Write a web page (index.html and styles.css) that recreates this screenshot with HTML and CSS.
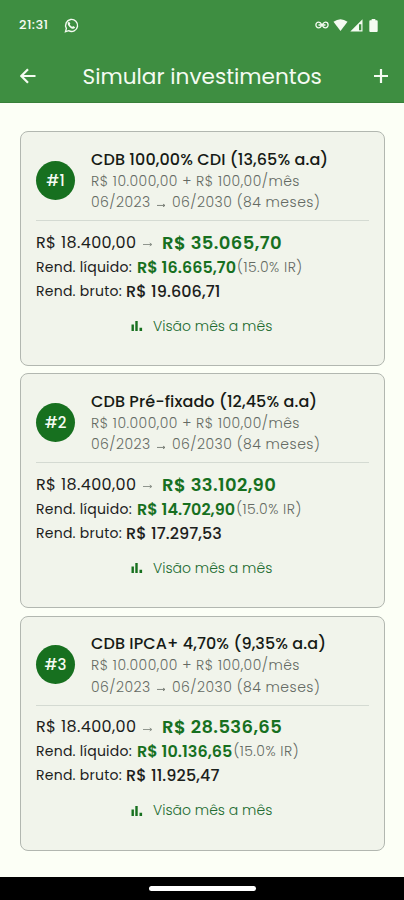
FILE: index.html
```
<!DOCTYPE html>
<html lang="pt-BR">
<head>
<meta charset="utf-8">
<title>Simular investimentos</title>
<link rel="stylesheet" href="styles.css">
</head>
<body>
<svg class="defs" width="0" height="0"><symbol id="bars" viewBox="0 0 12 12"><path d="M.5 4.500h2.400v6.500H.5zM4.300 1h2.400v10H4.300zM8.500 7.800h2.600V11H8.500z"/></symbol>
<symbol id="arrow" viewBox="0 0 10 6"><path d="M0 3.500h8.500M6.700 2 8.900 3.500 6.700 5" fill="none" stroke="currentColor" stroke-width=".9"/></symbol></svg>
<header>
  <div class="status">
    <span class="time">21:31</span>
    <svg class="wa" viewBox="0 0 24 24"><path fill="none" stroke="currentColor" stroke-width="2.200" d="M2.400 21.800 3.800 16.600A9.600 9.600 0 1 1 7.500 20.300z"/><path d="M8.600 6.600c-.5-.8-1.200-.6-1.800 0-2.200 2.300.2 5.700 2.700 8 2.700 2.400 5.700 3.500 7.600 1.500.7-.8.7-1.500.1-1.900l-2.100-1.200c-.5-.2-.8 0-1.500 1-1.900-.6-3.500-2-4.300-3.800.8-.9.9-1.200.6-1.800z"/></svg>
    <span class="space"></span>
    <svg class="link" viewBox="0 0 14 8"><path fill="none" stroke="currentColor" stroke-width="1.300" d="M7 4.100C5.900 2 5 1.200 3.700 1.200a2.800 2.800 0 0 0 0 5.600C5.300 6.800 6 5.500 7 4.100S8.700 1.200 10.300 1.200a2.800 2.800 0 0 1 0 5.600C9 6.800 8.100 6 7 4.100zM3.500 4h2.500M8 4h2.500"/></svg>
    <svg class="wifi" viewBox="0 0 14 12"><path d="M0 2.800Q7-2.400 14 2.800L7 12z"/></svg>
    <svg class="signal" viewBox="0 0 13 13"><path fill-rule="evenodd" d="M12.500.3V12.500H.3zM9 5.300V11.300h2.300V5.300z"/></svg>
    <svg class="battery" viewBox="0 0 9 14"><path d="M2.500 0h4v1.300H8q1 0 1 1V13q0 1-1 1H1q-1 0-1-1V2.300q0-1 1-1h1.500z"/></svg>
  </div>
  <div class="bar">
    <svg class="back" viewBox="0 0 16 16"><path d="M15.500 8H1.700M8 1.200 1.300 8 8 14.800"/></svg>
    <h1>Simular investimentos</h1>
    <svg class="plus" viewBox="0 0 16 16"><path d="M8 1v14M1 8h14"/></svg>
  </div>
</header>
<main>
  <article>
    <div class="top"><div class="rank">#1</div><div class="info">
      <h2>CDB 100,00% CDI (13,65% a.a)</h2>
      <p class="plan">R$ 10.000,00 + R$ 100,00/mês</p>
      <p class="dates"><span>06/2023</span><svg><use href="#arrow"/></svg><span>06/2030 (84 meses)</span></p>
    </div></div>
    <div class="total"><span class="from">R$ 18.400,00</span><svg><use href="#arrow"/></svg><b>R$ 35.065,70</b></div>
    <div class="net"><span>Rend. líquido:</span><b>R$ 16.665,70</b><small>(15.0% IR)</small></div>
    <div class="gross"><span>Rend. bruto:</span><b>R$ 19.606,71</b></div>
    <div class="action"><svg><use href="#bars"/></svg><span>Visão mês a mês</span></div>
  </article>
  <article>
    <div class="top"><div class="rank">#2</div><div class="info">
      <h2>CDB Pré-fixado (12,45% a.a)</h2>
      <p class="plan">R$ 10.000,00 + R$ 100,00/mês</p>
      <p class="dates"><span>06/2023</span><svg><use href="#arrow"/></svg><span>06/2030 (84 meses)</span></p>
    </div></div>
    <div class="total"><span class="from">R$ 18.400,00</span><svg><use href="#arrow"/></svg><b>R$ 33.102,90</b></div>
    <div class="net"><span>Rend. líquido:</span><b>R$ 14.702,90</b><small>(15.0% IR)</small></div>
    <div class="gross"><span>Rend. bruto:</span><b>R$ 17.297,53</b></div>
    <div class="action"><svg><use href="#bars"/></svg><span>Visão mês a mês</span></div>
  </article>
  <article>
    <div class="top"><div class="rank">#3</div><div class="info">
      <h2>CDB IPCA+ 4,70% (9,35% a.a)</h2>
      <p class="plan">R$ 10.000,00 + R$ 100,00/mês</p>
      <p class="dates"><span>06/2023</span><svg><use href="#arrow"/></svg><span>06/2030 (84 meses)</span></p>
    </div></div>
    <div class="total"><span class="from">R$ 18.400,00</span><svg><use href="#arrow"/></svg><b>R$ 28.536,65</b></div>
    <div class="net"><span>Rend. líquido:</span><b>R$ 10.136,65</b><small>(15.0% IR)</small></div>
    <div class="gross"><span>Rend. bruto:</span><b>R$ 11.925,47</b></div>
    <div class="action"><svg><use href="#bars"/></svg><span>Visão mês a mês</span></div>
  </article>
</main>
<footer><i></i></footer>
</body>
</html>
```
FILE: styles.css
```
* { box-sizing: border-box; margin: 0; padding: 0; }
body { width: 404px; height: 900px; overflow: hidden; display: flex; flex-direction: column; background: #fcfff6; color: #1c211c; font-family: Poppins, Inter, sans-serif; white-space: nowrap; }
svg { display: block; flex: none; fill: currentColor; }
.defs { display: none; }
header { height: 103px; background: #3e8e41; color: #f5fbf2; flex: none; border-bottom: 1px solid #378039; }
.status { height: 50px; padding: 0 26px 0 19px; display: flex; align-items: center; }
.time { font-size: 13px; font-weight: 500; letter-spacing: .4px; width: 45px; }
.wa { width: 15px; height: 15px; }
.space { flex: 1; }
.link { width: 14px; height: 8px; margin-right: 4px; }
.wifi { width: 15px; height: 12px; margin-right: 2px; }
.signal { width: 13px; height: 13px; margin-right: 6px; }
.battery { width: 9px; height: 13px; }
.bar { height: 52px; padding: 0 15px 0 20px; display: flex; align-items: center; }
.bar svg { fill: none; stroke: currentColor; stroke-width: 2.200; }
.back { width: 16px; height: 16px; }
.plus { width: 16px; height: 16px; }
h1 { font-size: 21.600px; font-weight: 400; margin-left: 46.500px; width: 290.500px; }
main { flex: 1; padding: 28px 19px 0 20px; display: flex; flex-direction: column; gap: 7.300px; }
article { height: 235px; flex: none; border: 1px solid #b2b7b0; border-bottom-width: 1.500px; border-radius: 8px; background: #f1f4eb; padding: 14px 15px 0; }
.top { height: 75px; display: flex; align-items: center; border-bottom: 1px solid #d4dad2; padding-bottom: 6px; }
.rank { width: 39px; height: 39px; border-radius: 50%; background: #17701f; color: #f5fbf2; font-size: 15px; font-weight: 500; display: flex; align-items: center; justify-content: center; margin-right: 16px; }
.info { padding-top: 1px; }
h2 { font-size: 16px; line-height: 23px; font-weight: 500; color: #161b16; letter-spacing: .1px; }
.plan, .dates { font-size: 14px; line-height: 21.500px; color: #646a63; font-weight: 300; letter-spacing: .47px; }
.dates { display: flex; align-items: center; }
.dates span:first-child { width: 66px; }
.dates svg { width: 9px; height: 6px; margin: 4px 6px 0 0; }
.total { height: 26px; margin-top: 8px; display: flex; align-items: center; }
.from { width: 107px; font-size: 16px; letter-spacing: .37px; }
.total svg { width: 10px; height: 6px; color: #858b83; margin: 4px 9px 0 0; }
.total b { font-size: 18px; font-weight: 600; color: #17701f; letter-spacing: .37px; }
.net, .gross { height: 24px; display: flex; align-items: center; font-size: 14px; }
.net span { width: 101px; letter-spacing: .25px; }
.gross span { width: 90px; letter-spacing: .25px; }
.net b, .gross b { font-size: 16px; font-weight: 500; letter-spacing: .1px; }
.net b { margin-right: 1px; color: #17701f; font-weight: 600; letter-spacing: .03px; }
.net small { font-size: 14px; color: #646a63; font-weight: 300; letter-spacing: .45px; }
.action { height: 24px; margin: 11px 0 0 95px; display: flex; align-items: center; color: #17701f; }
.action svg { width: 12px; height: 12px; margin-right: 10px; }
.action span { font-size: 14px; font-weight: 300; color: #216b30; }
footer { height: 23px; background: #000; flex: none; display: flex; align-items: center; justify-content: center; }
footer i { width: 107px; height: 5px; border-radius: 3px; background: #fff; }
```
